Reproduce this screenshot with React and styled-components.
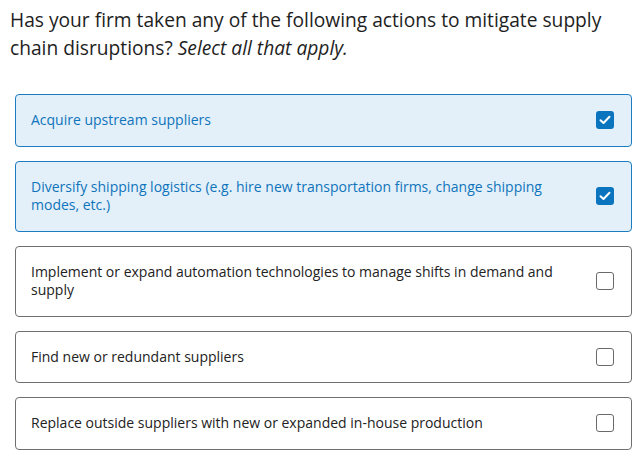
import React, { useState } from 'react';
import styled, { createGlobalStyle } from 'styled-components';

const GlobalStyle = createGlobalStyle`
    body {
        margin: 0;
        background: #ffffff;
        font-family: 'Open Sans', 'Noto Sans', sans-serif;
    }
`

const Wrapper = styled.div`
    padding: 6px 9px 0 15px;
`
const Question = styled.p`
    margin: 0 0 32px -5px;
    font-size: 19.2px;
    line-height: 28px;
    color: #1e1e1e;
    em {
        font-style: italic;
    }
`
const List = styled.div`
    display: flex;
    flex-direction: column;
    gap: 14px;
`
const Option = styled.label`
    display: flex;
    align-items: center;
    padding: 16px 17px 16px 15px;
    border: 1px solid ${props => props.checked ? '#1d7cc0' : '#6f6f6f'};
    border-radius: 4px;
    background: ${props => props.checked ? '#e3f0f9' : '#ffffff'};
    color: ${props => props.checked ? '#0f74bb' : '#222222'};
    cursor: pointer;
`
const OptionText = styled.span`
    flex: 1;
    margin-right: 30px;
    font-size: 14px;
    line-height: 18.5px;
`
const Box = styled.span`
    flex: none;
    display: flex;
    align-items: center;
    justify-content: center;
    width: 18px;
    height: 18px;
    box-sizing: border-box;
    border-radius: 3px;
    border: ${props => props.checked ? 'none' : '1px solid #6a6a6a'};
    background: ${props => props.checked ? '#0b74bf' : '#ffffff'};
`

const options = [
    { text: 'Acquire upstream suppliers', checked: true },
    { text: 'Diversify shipping logistics (e.g. hire new transportation firms, change shipping modes, etc.)', checked: true },
    { text: 'Implement or expand automation technologies to manage shifts in demand and supply', checked: false },
    { text: 'Find new or redundant suppliers', checked: false },
    { text: 'Replace outside suppliers with new or expanded in-house production', checked: false },
];

const Check = () => (
    <svg width="12" height="10" viewBox="0 0 12 10">
        <path d="M1.5 5.2 L4.5 8 L10.5 1.8" fill="none" stroke="#ffffff" strokeWidth="2" strokeLinecap="round" strokeLinejoin="round" />
    </svg>
);

const App = () => {
    const [items, setItems] = useState(options);

    const toggle = (i) => {
        setItems(items.map((o, idx) => idx === i ? { ...o, checked: !o.checked } : o));
    }

    return (
        <Wrapper>
            <GlobalStyle />
            <Question>
                Has your firm taken any of the following actions to mitigate supply chain disruptions? <em>Select all that apply.</em>
            </Question>
            <List>
                {items.map((o, i) => (
                    <Option key={i} checked={o.checked} onClick={() => toggle(i)}>
                        <OptionText>{o.text}</OptionText>
                        <Box checked={o.checked}>{o.checked ? <Check /> : null}</Box>
                    </Option>
                ))}
            </List>
        </Wrapper>
    );
}

export default App;
